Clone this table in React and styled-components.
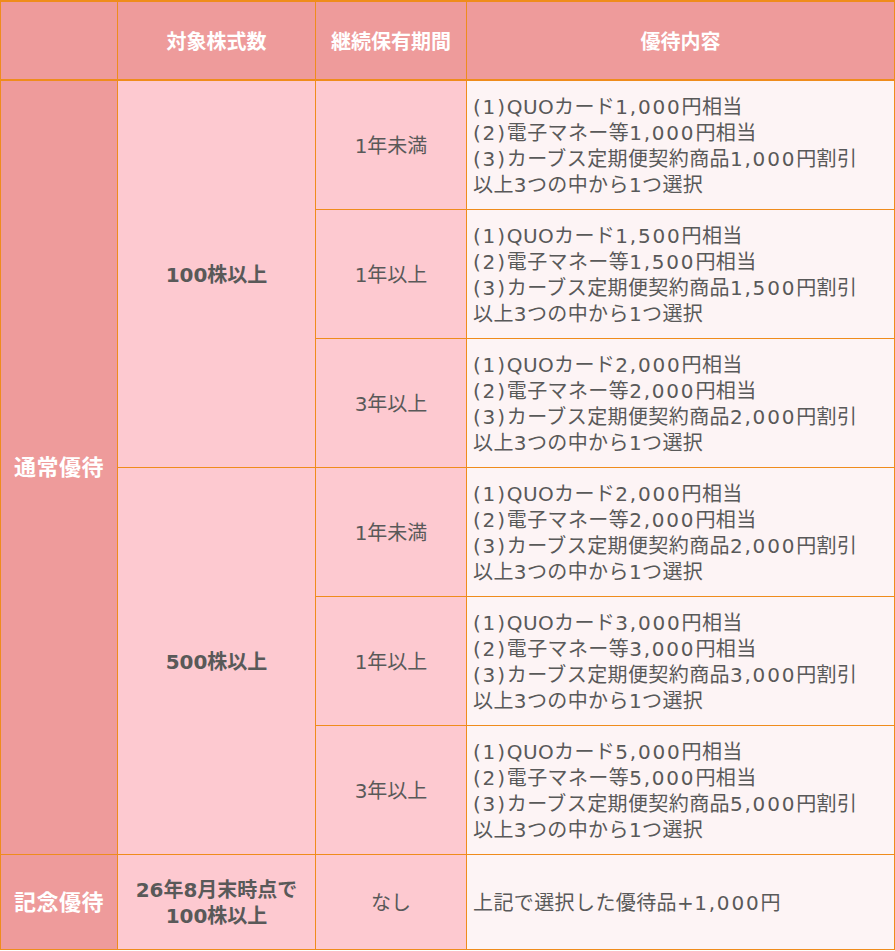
import styled, { createGlobalStyle } from 'styled-components';

const GlobalStyle = createGlobalStyle`
  html, body {
    margin: 0;
    padding: 0;
    background: #fff;
  }
  body {
    font-family: "DejaVu Sans", "Noto Sans CJK JP", sans-serif;
  }
`;

const Table = styled.table`
  width: 895px;
  border-collapse: collapse;
  table-layout: fixed;
  color: #595959;
  font-size: 20px;
  line-height: 26px;
`;

const Cell = styled.td`
  border: 1px solid #ef8c1c;
  padding: 3px 0 0;
  text-align: center;
  vertical-align: middle;
  background: #fdc9d0;
  font-weight: ${({ bold }) => (bold ? 700 : 400)};
`;

const HeadCell = styled.th`
  border: 1px solid #ef8c1c;
  border-bottom-width: 2px;
  border-top-width: 2px;
  height: 75px;
  padding: 2px 0 0;
  background: #ee9b9b;
  color: #fff;
  font-weight: 700;
  font-size: 20px;
`;

const LabelCell = styled.td`
  border: 1px solid #ef8c1c;
  padding: 2px 0 0;
  background: #ee9b9b;
  color: #fff;
  font-weight: 700;
  font-size: 22px;
  letter-spacing: 0.5px;
  text-align: center;
`;

const ContentCell = styled.td`
  border: 1px solid #ef8c1c;
  padding: 3px 6px 0;
  text-align: left;
  vertical-align: middle;
  background: #fdf4f5;
  letter-spacing: 0.4px;
`;

const Num = styled.span`
  letter-spacing: 1.8px;
`;

const DataRow = styled.tr`
  height: ${({ h }) => h}px;
`;

const groups = [
  { shares: '100株以上', periods: [['1年未満', '1,000'], ['1年以上', '1,500'], ['3年以上', '2,000']] },
  { shares: '500株以上', periods: [['1年未満', '2,000'], ['1年以上', '3,000'], ['3年以上', '5,000']] },
];

function Benefit({ amount }) {
  return (
    <>
      <Num>(1)</Num>QUOカード<Num>{amount}</Num>円相当
      <br />
      <Num>(2)</Num>電子マネー等<Num>{amount}</Num>円相当
      <br />
      <Num>(3)</Num>カーブス定期便契約商品<Num>{amount}</Num>円割引
      <br />
      以上3つの中から1つ選択
    </>
  );
}

export default function App() {
  return (
    <>
      <GlobalStyle />
      <Table>
        <colgroup>
          <col style={{ width: 117 }} />
          <col style={{ width: 198 }} />
          <col style={{ width: 151 }} />
          <col />
        </colgroup>
        <thead>
          <tr>
            <HeadCell />
            <HeadCell>対象株式数</HeadCell>
            <HeadCell>継続保有期間</HeadCell>
            <HeadCell>優待内容</HeadCell>
          </tr>
        </thead>
        <tbody>
          {groups.map((g, gi) =>
            g.periods.map(([period, amount], pi) => (
              <DataRow h={129} key={`${gi}-${pi}`}>
                {gi === 0 && pi === 0 && <LabelCell rowSpan={6}>通常優待</LabelCell>}
                {pi === 0 && (
                  <Cell bold rowSpan={3}>
                    {g.shares}
                  </Cell>
                )}
                <Cell>{period}</Cell>
                <ContentCell>
                  <Benefit amount={amount} />
                </ContentCell>
              </DataRow>
            ))
          )}
          <DataRow h={95}>
            <LabelCell>記念優待</LabelCell>
            <Cell bold>
              26年8月末時点で
              <br />
              100株以上
            </Cell>
            <Cell>なし</Cell>
            <ContentCell>
              上記で選択した優待品+<Num>1,000</Num>円
            </ContentCell>
          </DataRow>
        </tbody>
      </Table>
    </>
  );
}
